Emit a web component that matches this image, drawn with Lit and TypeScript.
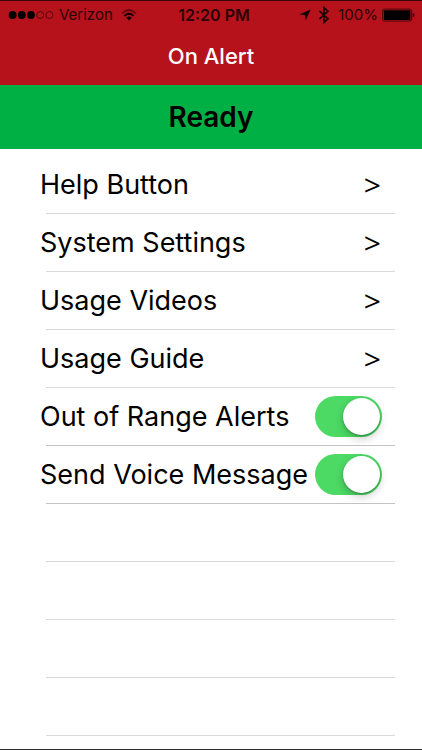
import { LitElement, html, css, svg } from "lit";
import { customElement, property } from "lit/decorators.js";

@customElement("status-bar")
class StatusBar extends LitElement {
  static styles = css`
    :host {
      display: grid;
      grid-template-columns: 1fr auto 1fr;
      align-items: center;
      height: 28px;
      padding: 0 7px 0 8px;
      color: #2a0205;
      font-size: 15px;
      line-height: 20px;
    }
    .side {
      display: flex;
      align-items: center;
    }
    .end {
      justify-content: flex-end;
    }
    .time {
      font-weight: 600;
      font-size: 16px;
      padding-left: 5px;
    }
    .carrier {
      margin: 0 8px 0 5px;
    }
    .percent {
      margin: 0 4px 0 8px;
    }
    svg {
      display: block;
      flex: none;
    }
    .bluetooth {
      margin-left: 7px;
    }
  `;

  render() {
    return html`
      <div class="side">
        <svg width="46" height="10" viewBox="0 0 46 10" role="img" aria-label="Signal: 3 of 5">
          ${[0, 1, 2, 3, 4].map((i) =>
            i < 3
              ? svg`<circle cx=${4.6 + i * 9.2} cy="5" r="3.9" fill="#000" />`
              : svg`<circle cx=${4.6 + i * 9.2} cy="5" r="3.5" fill="none" stroke="#4a060b" stroke-width="0.9" />`
          )}
        </svg>
        <span class="carrier">Verizon</span>
        <svg width="16" height="12" viewBox="0 0 16 12" fill="none" role="img" aria-label="Wi-Fi">
          <path d="M1 4.3Q8 -2.3 15 4.3" stroke="#65080f" stroke-width="1.7" />
          <path d="M3.4 6.9Q8 2.7 12.6 6.9" stroke="#120001" stroke-width="1.9" />
          <path d="M5.2 8.7Q8 6.3 10.8 8.7L8 11.6Z" fill="#120001" />
        </svg>
      </div>
      <span class="time">12:20 PM</span>
      <div class="side end">
        <svg width="12" height="12" viewBox="0 0 12 12" role="img" aria-label="Location">
          <path d="M11.6 .5L6.6 11.6L6 6.2L.4 5.6Z" fill="#170102" />
        </svg>
        <svg class="bluetooth" width="12" height="18" viewBox="0 0 12 18" role="img" aria-label="Bluetooth">
          <path d="M1.4 5L10 12.8L6 16.4V1.6L10 5.2L1.4 13" fill="none" stroke="#170102" stroke-width="1.6" />
        </svg>
        <span class="percent">100%</span>
        <svg width="33" height="14" viewBox="0 0 33 14" role="img" aria-label="Battery full">
          <rect x=".6" y="1.1" width="29" height="12" rx="2" fill="none" stroke="#4a060b" stroke-width="1" />
          <rect x="1.8" y="2.3" width="26.6" height="9.6" rx="1" fill="#000" />
          <path d="M30.6 4.8Q32.6 5.2 32.6 7.1T30.6 9.4Z" fill="#35050a" />
        </svg>
      </div>
    `;
  }
}

@customElement("toggle-switch")
class ToggleSwitch extends LitElement {
  @property() label = "";

  static styles = css`
    label {
      display: flex;
      align-items: center;
      justify-content: space-between;
      height: 57px;
      padding-right: 13px;
      white-space: nowrap;
    }
    input {
      appearance: none;
      flex: none;
      display: flex;
      align-items: center;
      box-sizing: border-box;
      width: 67px;
      height: 41px;
      margin: 0;
      padding: 0 2px;
      border-radius: 21px;
      background: #d8d8d8;
    }
    input::before {
      content: "";
      width: 37px;
      height: 37px;
      border-radius: 50%;
      background: #fff;
      box-shadow: 0 4px 8px rgba(0, 0, 0, 0.2), 0 1px 2px rgba(0, 0, 0, 0.25);
    }
    input:checked {
      background: #4cd964;
      justify-content: flex-end;
    }
  `;

  render() {
    return html`<label>${this.label}<input type="checkbox" role="switch" checked /></label>`;
  }
}

@customElement("app-root")
class AppRoot extends LitElement {
  static styles = css`
    :host {
      display: flex;
      flex-direction: column;
      box-sizing: border-box;
      min-height: 100vh;
      border-top: 1px solid #3a0508;
      border-bottom: 1px solid #2b2b2d;
      background: #fff;
      color: #000;
      font-family: Inter, "Liberation Sans", sans-serif;
    }
    header {
      background: #b5121b;
      padding-bottom: 14px;
    }
    h1 {
      margin: 0;
      padding-top: 12px;
      text-align: center;
      color: #fff;
      font-size: 22px;
      line-height: 30px;
      font-weight: 500;
    }
    .state {
      margin: 0;
      height: 64px;
      display: flex;
      align-items: center;
      justify-content: center;
      background: #00b044;
      font-size: 28px;
      line-height: 32px;
      font-weight: 600;
    }
    ul {
      list-style: none;
      margin: 0;
      padding: 7px 27px 0 40px;
      font-size: 27px;
      line-height: 32px;
    }
    li::after {
      content: "";
      display: block;
      height: 1px;
      margin-left: 6px;
      background: #d9d9db;
    }
    .setting::after {
      background: #c4c4c8;
    }
    .blank {
      padding-top: 57px;
    }
    a {
      display: flex;
      align-items: center;
      justify-content: space-between;
      height: 57px;
      padding-right: 14px;
      color: inherit;
      text-decoration: none;
    }
    .arrow {
      font-family: "Open Sans", "Noto Sans", sans-serif;
      font-size: 30px;
    }
  `;

  private links = ["Help Button", "System Settings", "Usage Videos", "Usage Guide"];
  private settings = ["Out of Range Alerts", "Send Voice Message"];

  render() {
    return html`
      <header>
        <status-bar></status-bar>
        <h1>On Alert</h1>
      </header>
      <p class="state" role="status">Ready</p>
      <ul>
        ${this.links.map(
          (name) => html`<li><a href="#"><span>${name}</span><span class="arrow" aria-hidden="true">&gt;</span></a></li>`
        )}
        ${this.settings.map(
          (name) => html`<li class="setting"><toggle-switch .label=${name}></toggle-switch></li>`
        )}
        ${[0, 1, 2, 3].map(() => html`<li class="blank" aria-hidden="true"></li>`)}
      </ul>
    `;
  }
}
